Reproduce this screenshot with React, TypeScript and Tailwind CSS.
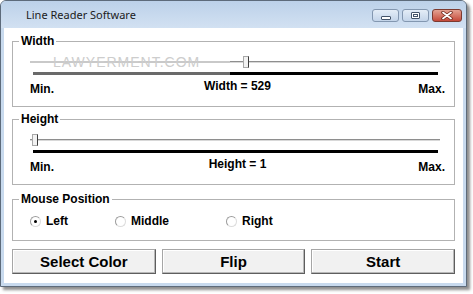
import React from 'react';

const FONT = { fontFamily: '"Liberation Sans", Arial, sans-serif' };

interface GroupBoxProps {
  title: string;
  className?: string;
  children: React.ReactNode;
}

const GroupBox: React.FC<GroupBoxProps> = ({ title, className = '', children }) => (
  <fieldset className={`border border-[#b2b2b2] ${className}`}>
    <legend className="ml-[6px] px-[2px] text-[12px] leading-[14px] font-bold text-black">{title}</legend>
    {children}
  </fieldset>
);

interface SliderProps {
  thumbLeft: number;
  splitAt: number;
  label: string;
  watermark?: boolean;
}

// 滑桿 + 粗線 + 標籤
const LineSlider: React.FC<SliderProps> = ({ thumbLeft, splitAt, label, watermark }) => (
  <div>
    <div className="relative mt-[8px] ml-[17px] mr-[14px] h-[12px] flex items-center">
      <div className="flex w-full h-[2px]">
        <div className="h-full bg-[#c9c9c9]" style={{ width: splitAt }} />
        <div className="h-full flex-1 bg-[#8e8e8e] border-b border-[#d8d8d8]" />
      </div>
      {watermark && (
        <span className="absolute left-[23px] top-[-1px] text-[14px] leading-[14px] tracking-[1px] text-[#cdcdcd] select-none">
          LAWYERMENT.COM
        </span>
      )}
      <div
        className="absolute top-0 w-[6px] h-[12px] bg-[#f2f2f2] border border-[#a8a8a8] border-r-[#3c3c3c]"
        style={{ left: thumbLeft }}
      />
    </div>
    <div className="flex mt-[4px] ml-[20px] mr-[16px] h-[3px]">
      <div className="h-full bg-[#6a6a6a]" style={{ width: splitAt - 3 }} />
      <div className="h-full flex-1 bg-black" />
    </div>
    <div className="grid grid-cols-[1fr_auto_1fr] items-start mt-[4px] ml-[17px] mr-[9px] text-[12px] leading-[14px] font-bold text-black">
      <span className="mt-[3px]">Min.</span>
      <span>{label}</span>
      <span className="mt-[3px] justify-self-end">Max.</span>
    </div>
  </div>
);

const Radio: React.FC<{ label: string; checked?: boolean; className: string }> = ({ label, checked, className }) => (
  <div className={`flex items-center gap-[5px] ${className}`}>
    <div className="w-[11px] h-[11px] rounded-full border border-[#9c9c9c] border-r-[#dcdcdc] border-b-[#dcdcdc] bg-white flex items-center justify-center">
      {checked && <div className="w-[3px] h-[3px] rounded-full bg-black" />}
    </div>
    <span className="text-[12px] leading-[14px] font-bold text-black">{label}</span>
  </div>
);

const WinButton: React.FC<{ label: string }> = ({ label }) => (
  <button className="flex-1 h-[25px] bg-[#f1f1f1] border border-[#a6a6a6] border-r-[#5e5e5e] border-b-[#5e5e5e] shadow-[inset_-1px_-1px_0_#b8b8b8,inset_1px_1px_0_#ffffff] text-[15px] leading-[17px] font-bold text-black">
    {label}
  </button>
);

const CaptionButton: React.FC<{ kind: 'min' | 'max' | 'close' }> = ({ kind }) => {
  if (kind === 'close') {
    return (
      <div className="w-[30px] h-[13px] rounded-[3px] border border-[#7c3a30] bg-linear-to-b from-[#e3a192] to-[#c4483a] flex items-center justify-center">
        <svg width="12" height="9" viewBox="0 0 12 9">
          <path d="M2 1.5 L10 7.5 M10 1.5 L2 7.5" stroke="#6a2418" strokeWidth="3.4" strokeLinecap="round" />
          <path d="M2 1.5 L10 7.5 M10 1.5 L2 7.5" stroke="#ffffff" strokeWidth="1.8" strokeLinecap="round" />
        </svg>
      </div>
    );
  }
  return (
    <div className="w-[27px] h-[13px] rounded-[3px] border border-[#8397b0] bg-linear-to-b from-[#e4edf7] to-[#c3d4e9] flex items-center justify-center">
      {kind === 'min' ? (
        <div className="mt-[4px] w-[10px] h-[4px] rounded-[1px] border border-[#44546a] bg-white" />
      ) : (
        <div className="w-[9px] h-[7px] rounded-[1px] border border-[#44546a] bg-white flex items-center justify-center">
          <div className="w-[5px] h-[3px] border border-[#44546a]" />
        </div>
      )}
    </div>
  );
};

export default function App() {
  return (
    <div className="w-[473px] h-[294px] bg-white overflow-hidden" style={FONT}>
      <div className="w-[467px] flex flex-col border border-[#5d6b7b] rounded-t-[6px] bg-[#c8daee] shadow-[3px_3px_3px_rgba(0,0,0,0.45)]">
        {/* 標題列 */}
        <div className="h-[27px] flex items-start rounded-t-[5px] bg-linear-to-b from-[#bcd1e9] to-[#d2e1f2]">
          <span
            className="mt-[6px] ml-[25px] text-[11px] leading-[16px] text-[#1b1b1b]"
            style={{ fontFamily: '"Noto Sans", "Open Sans", sans-serif' }}
          >
            Line Reader Software
          </span>
          <div className="ml-auto mr-[4px] mt-[8px] flex gap-[3px]">
            <CaptionButton kind="min" />
            <CaptionButton kind="max" />
            <CaptionButton kind="close" />
          </div>
        </div>

        {/* 內容區 */}
        <div className="mx-[3px] mb-[3px] h-[255px] bg-white px-[8px] pt-[6px]">
          <GroupBox title="Width" className="pb-[10px] relative">
            <LineSlider thumbLeft={213} splitAt={200} label="Width = 529" watermark />
          </GroupBox>

          <GroupBox title="Height" className="mt-[5px] pb-[10px]">
            <LineSlider thumbLeft={2} splitAt={0} label="Height = 1" />
          </GroupBox>

          <GroupBox title="Mouse Position" className="mt-[7px] pb-[12px]">
            <div className="flex mt-[8px] ml-[17px]">
              <Radio label="Left" checked className="w-[85px]" />
              <Radio label="Middle" className="w-[111px]" />
              <Radio label="Right" className="" />
            </div>
          </GroupBox>

          <div className="flex gap-[6px] mt-[8px]">
            <WinButton label="Select Color" />
            <WinButton label="Flip" />
            <WinButton label="Start" />
          </div>
        </div>
      </div>
    </div>
  );
}
